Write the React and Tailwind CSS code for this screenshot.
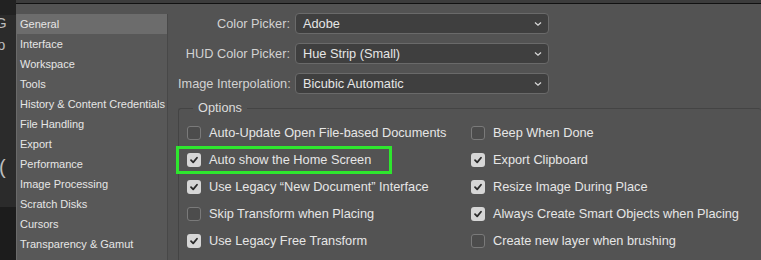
import React from "react";

const sections = [
  "General",
  "Interface",
  "Workspace",
  "Tools",
  "History & Content Credentials",
  "File Handling",
  "Export",
  "Performance",
  "Image Processing",
  "Scratch Disks",
  "Cursors",
  "Transparency & Gamut",
  "Units & Rulers",
];

const pickers = [
  { label: "Color Picker:", value: "Adobe" },
  { label: "HUD Color Picker:", value: "Hue Strip (Small)" },
  { label: "Image Interpolation:", value: "Bicubic Automatic" },
];

const leftOptions = [
  { label: "Auto-Update Open File-based Documents", on: false },
  { label: "Auto show the Home Screen", on: true, highlight: true },
  { label: "Use Legacy \u201cNew Document\u201d Interface", on: true },
  { label: "Skip Transform when Placing", on: false },
  { label: "Use Legacy Free Transform", on: true },
];

const rightOptions = [
  { label: "Beep When Done", on: false },
  { label: "Export Clipboard", on: true },
  { label: "Resize Image During Place", on: true },
  { label: "Always Create Smart Objects when Placing", on: true },
  { label: "Create new layer when brushing", on: false },
];

const Checkbox = ({ on }) =>
  on ? (
    <span className="w-[14px] h-[14px] rounded-[3px] bg-[#d6d6d6] flex items-center justify-center shrink-0">
      <svg width="10" height="10" viewBox="0 0 10 10">
        <path d="M2 5.2 L4.2 7.4 L8 2.8" fill="none" stroke="#2a2a2a" strokeWidth="1.8" strokeLinecap="round" strokeLinejoin="round" />
      </svg>
    </span>
  ) : (
    <span className="w-[14px] h-[14px] rounded-[3px] bg-[#4c4c4c] border border-[#7a7a7a] shrink-0" />
  );

const OptionRow = ({ label, on, highlight }) => (
  <div className="h-[27px] flex items-center relative">
    {highlight && (
      <div className="absolute left-[-11px] top-[0px] w-[216px] h-[28px] border-[3px] border-[#2ee62e]" />
    )}
    <Checkbox on={on} />
    <span className="ml-[8px] whitespace-nowrap">{label}</span>
  </div>
);

const App = () => {
  return (
    <div
      className="w-[761px] h-[260px] overflow-hidden flex bg-[#535353] text-[#e6e6e6]"
      style={{ fontFamily: '"Liberation Sans", Arial, sans-serif' }}
    >
      {/* window behind, left edge */}
      <div className="w-[16px] shrink-0 flex flex-col bg-[#2b2b2b] text-[#bdbdbd] text-[15px] leading-none overflow-hidden">
        <div className="h-[15px] bg-[#222]" />
        <div className="ml-[-5px] h-[22px]">G</div>
        <div className="ml-[-3px] h-[120px]">p</div>
        <div className="ml-[-1px] h-[50px] text-[20px]">(</div>
        <div className="flex-1 bg-[#1c1c1c]" />
      </div>

      <div className="flex-1 flex flex-col min-w-0">
        {/* top strip */}
        <div className="h-[3px] bg-[#3c3c3c] shrink-0" />
        <div className="h-[1px] bg-[#111] shrink-0" />

        <div className="flex flex-1 min-h-0">
          {/* sidebar */}
          <div className="w-[152px] shrink-0 mt-[10px] bg-[#585858] border-l border-[#6a6a6a] border-r border-r-[#484848] text-[11px] overflow-hidden">
            {sections.map((s, i) => (
              <div
                key={s}
                className={`h-[20px] pl-[3px] flex items-center whitespace-nowrap ${i === 0 ? "bg-[#6c6c6c]" : ""}`}
              >
                {s}
              </div>
            ))}
          </div>

          {/* main */}
          <div className="flex-1 pl-[10px] pt-[9px] text-[12.75px]">
            <div className="flex flex-col gap-[9px]">
              {pickers.map((p) => (
                <div key={p.label} className="flex items-center">
                  <div className="w-[112px] text-right text-[#d2d2d2] whitespace-nowrap">{p.label}</div>
                  <div className="ml-[5px] w-[254px] h-[21px] rounded-[4px] bg-[#3f3f3f] border border-[#6a6a6a] flex items-center justify-between pl-[7px] pr-[6px]">
                    <span>{p.value}</span>
                    <svg width="8" height="6" viewBox="0 0 8 6">
                      <path d="M1 1.5 L4 4.2 L7 1.5" fill="none" stroke="#d8d8d8" strokeWidth="1.3" />
                    </svg>
                  </div>
                </div>
              ))}
            </div>

            {/* Options group */}
            <div className="relative mt-[14px] border border-[#444] rounded-[3px] border-r-0 h-[160px] pl-[8px] pt-[10px]">
              <div className="absolute top-[-9px] left-[14px] px-[5px] bg-[#535353] leading-[16px] text-[#dcdcdc]">Options</div>
              <div className="flex">
                <div className="w-[284px] flex flex-col">
                  {leftOptions.map((o) => (
                    <OptionRow key={o.label} {...o} />
                  ))}
                </div>
                <div className="flex flex-col">
                  {rightOptions.map((o) => (
                    <OptionRow key={o.label} {...o} />
                  ))}
                </div>
              </div>
            </div>
          </div>
        </div>
      </div>
    </div>
  );
};

export default App;
